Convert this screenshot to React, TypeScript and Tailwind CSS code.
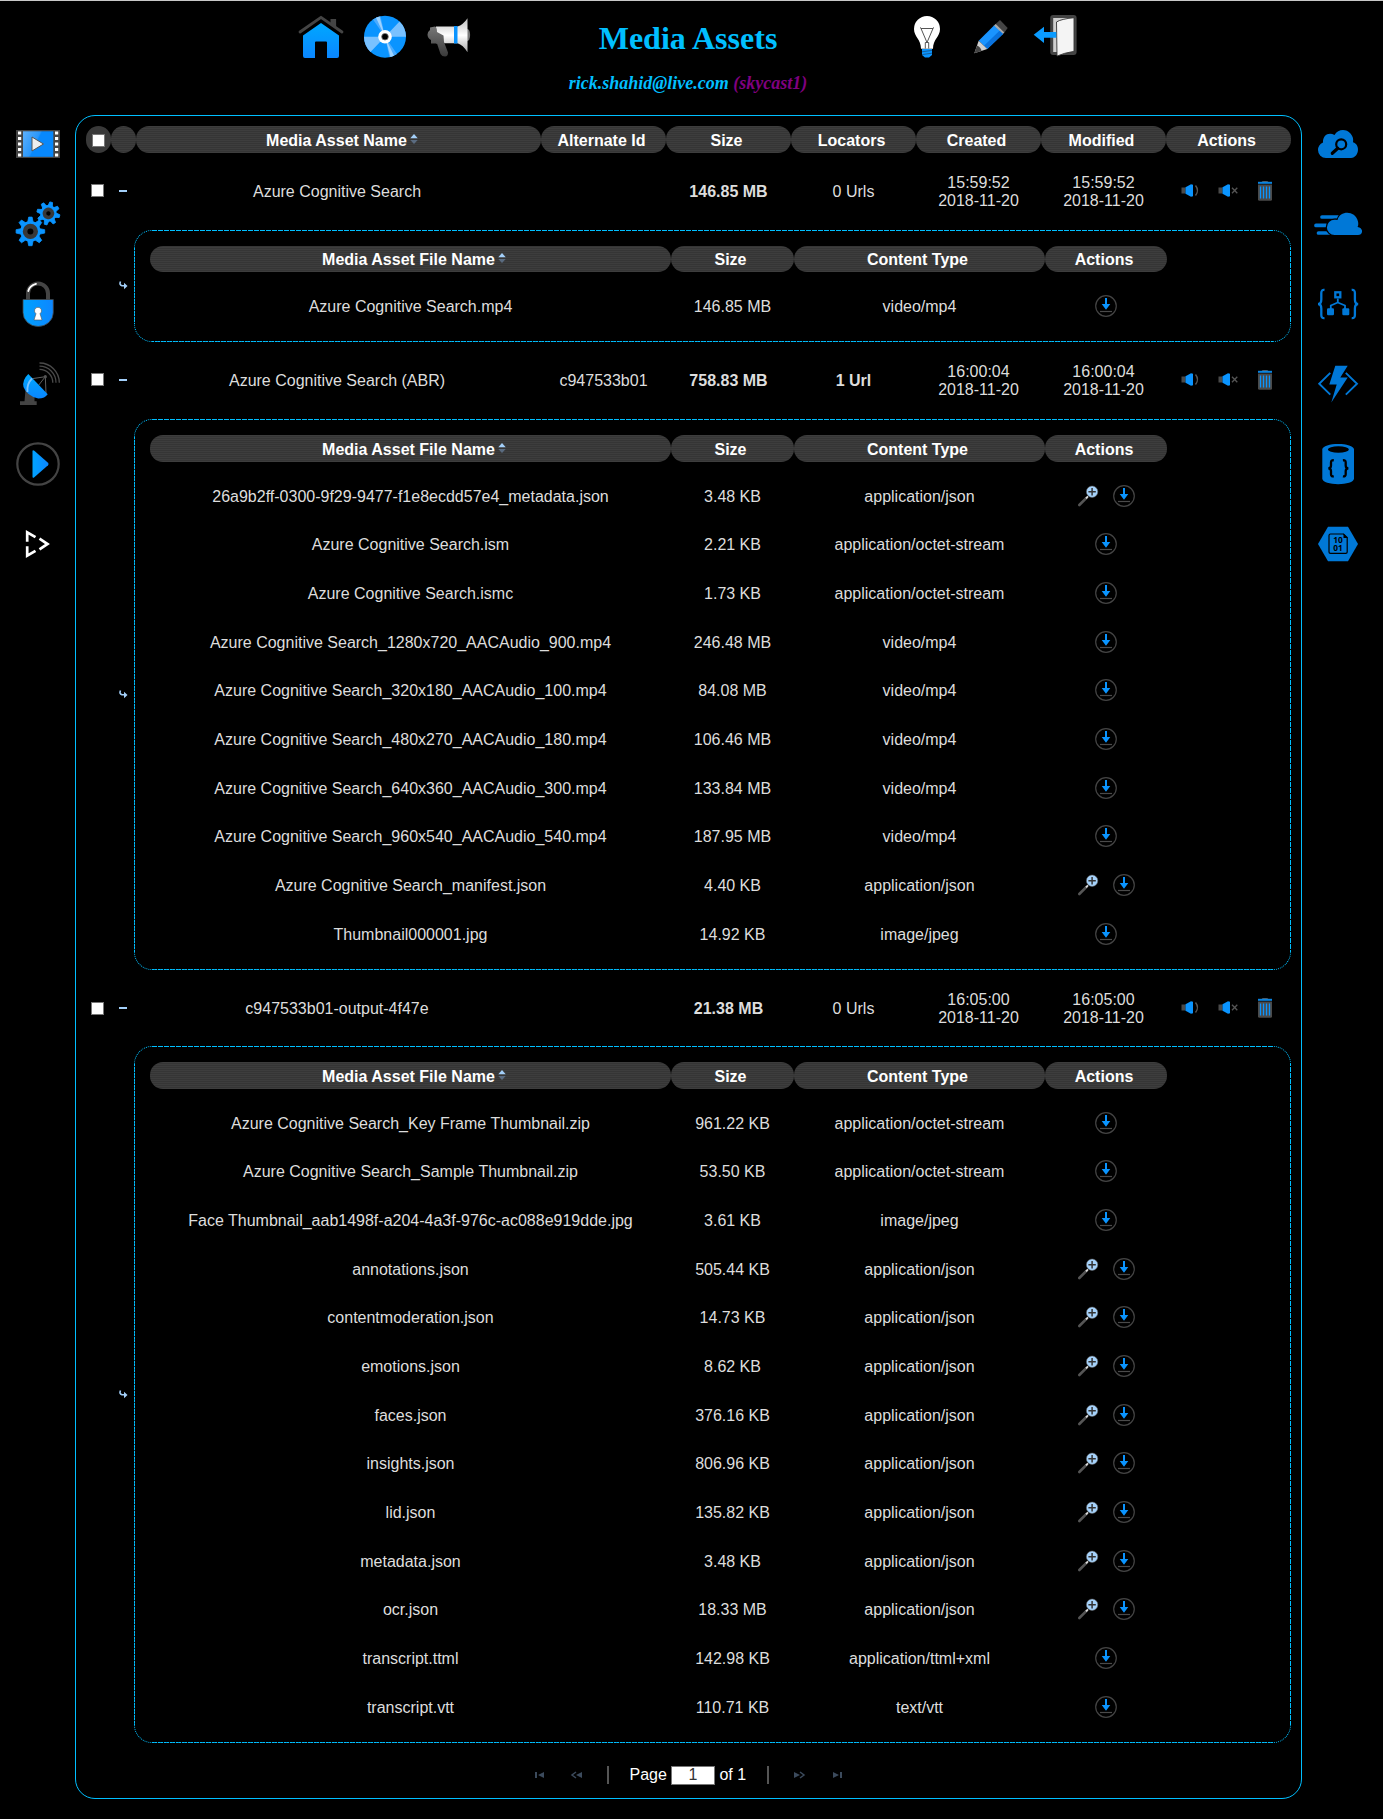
import type { ReactNode } from "react";

const BLUE = "#0078d7";
const SKY = "#0a94ff";
const DARK = "#444444";

function Icon({ children, size = 48, box = 48 }: { children: ReactNode; size?: number; box?: number }) {
  return (
    <svg width={size} height={size} viewBox={`0 0 ${box} ${box}`} fill="none" className="block shrink-0">
      {children}
    </svg>
  );
}

const Gradients = () => (
  <svg width="0" height="0" className="absolute">
    <defs>
      <linearGradient id="sky" x1="0" y1="0" x2="0" y2="1">
        <stop offset="0" stopColor="#00a8ff" />
        <stop offset="1" stopColor="#0a86ff" />
      </linearGradient>
      <linearGradient id="skyx" x1="0" y1="0" x2="1" y2="0">
        <stop offset="0" stopColor="#00a2ff" />
        <stop offset="1" stopColor="#0d86ff" />
      </linearGradient>
      <linearGradient id="film" x1="0" y1="0" x2="1" y2="0.4">
        <stop offset="0" stopColor="#5db0fb" />
        <stop offset="0.5" stopColor="#2a97fb" />
        <stop offset="0.55" stopColor="#0888fc" />
        <stop offset="1" stopColor="#0888fc" />
      </linearGradient>
      <linearGradient id="metal" x1="0" y1="0" x2="0" y2="1">
        <stop offset="0" stopColor="#bdbdbd" />
        <stop offset="0.5" stopColor="#ffffff" />
        <stop offset="1" stopColor="#a8a8a8" />
      </linearGradient>
      <linearGradient id="grip" x1="0" y1="0" x2="0" y2="1">
        <stop offset="0" stopColor="#777" />
        <stop offset="1" stopColor="#3a3a3a" />
      </linearGradient>
    </defs>
  </svg>
);

const HomeIcon = () => (
  <Icon>
    <path d="M33.5 6h5.6v9l-5.6-4.500z" fill={DARK} />
    <path d="M3 19 24 4.300 45 19" stroke={DARK} strokeWidth="2.800" strokeLinecap="round" strokeLinejoin="round" />
    <path d="M24 10 42 22.500V43a2 2 0 0 1-2 2H30V29.500a1 1 0 0 0-1-1H19a1 1 0 0 0-1 1V45H8a2 2 0 0 1-2-2V22.500Z" fill="url(#sky)" />
  </Icon>
);
const DiscIcon = () => (
  <Icon>
    <circle cx="24" cy="23.700" r="21" fill={SKY} />
    <path d="M24 23.700 45 23.700A21 21 0 0 0 38.500 8.500ZM24 23.700 3 23.700A21 21 0 0 0 9.500 38.900Z" fill="#79c1ff" />
    <path d="M24 23.700 12 6.500A21 21 0 0 1 19.500 3.200ZM24 23.700 36 40.900A21 21 0 0 1 28.500 44.200Z" fill="#4aabff" />
    <path d="M24 23.700 15 4.700 18.500 3.400ZM24 23.700 33 42.700 29.500 44Z" fill="#9dd2ff" />
    <circle cx="24" cy="23.700" r="6.800" fill="#fff" />
    <circle cx="24" cy="23.700" r="3.300" fill="#000" stroke="#777" strokeWidth="0.800" />
  </Icon>
);
const MegaphoneIcon = () => (
  <Icon>
    <ellipse cx="42.500" cy="22" rx="2.600" ry="6" fill="#777" />
    <path d="M11 13.500H32.500Q38 12 42.500 5.300V39.300Q38 32 32.500 30.300H11Z" fill="url(#metal)" />
    <rect x="29" y="13" width="3.500" height="17.500" fill={SKY} />
    <path d="M5 14.500 10 13.500Q12 14 12 19L18.500 22.500 19 29 23 39.500Q23 43.500 20 43.500 17 43.500 15.500 41L12 30.500H6V27Q2.500 25 2.500 21.500 2.500 18.500 5 17Z" fill="url(#grip)" />
  </Icon>
);
const BulbIcon = () => (
  <Icon>
    <path d="M24 3A13 13 0 0 1 37 16C37 24 30 26 30 35.700H18C18 26 11 24 11 16A13 13 0 0 1 24 3Z" fill="#fff" />
    <path d="M22.300 35.500V29.500H25.700V35.500M24 29.500 18 15.500H30L24 29.500M17 14.500 19 16M31 14.500 29 16" stroke="#555" strokeWidth="1" />
    <path d="M19 36H29V42L26 44.500H22L19 42Z" fill={SKY} />
    <path d="M19 38.800 29 37.400M19 41.600 29 40.200" stroke="#185080" strokeWidth="0.800" />
  </Icon>
);
const PencilIcon = () => (
  <Icon>
    <path d="M33 7 40.700 15 37 20 27.500 12Z" fill={DARK} />
    <path d="M28.700 11 37.300 19.500 35.500 21.500 26.500 13Z" fill="#aaa" />
    <path d="M27 12.500 36 21 20.300 36 11.700 27.700Z" fill="#1a94ff" />
    <path d="M32.500 17.700 36 21 20.300 36 17 32.700Z" fill="#0a72dd" />
    <path d="M11.700 27.700 20.300 36 7.300 40.300Z" fill="#d0d0d0" />
    <path d="M10 32.500Q14 34 14.500 38L7.300 40.300Z" fill={DARK} />
  </Icon>
);
const ExitIcon = () => (
  <Icon>
    <rect x="20.700" y="3.500" width="23.400" height="37" rx="1.500" fill="#cfcfcf" stroke={DARK} strokeWidth="3" />
    <path d="M25.500 9Q30 6 43 4.700V38.300Q33 40 26 43Z" fill="#f4f4f4" stroke="#333" strokeWidth="0.900" />
    <path d="M2.700 21.700 13 13.700V19H25.300V24.700H13V30Z" fill="#0a9bff" />
  </Icon>
);

const FilmIcon = () => (
  <Icon>
    <rect x="2" y="10" width="44" height="28" fill={DARK} />
    <rect x="9" y="11.300" width="30.300" height="25.500" fill="url(#film)" />
    {[11.5, 17, 22.500, 28, 33.500].map((y) => (
      <g key={y} fill="#fff">
        <rect x="4" y={y} width="3.200" height="3" />
        <rect x="41" y={y} width="3.200" height="3" />
      </g>
    ))}
    <path d="M18 17V31L29.500 24Z" fill="#eee" stroke="#555" strokeWidth="1" />
  </Icon>
);

function Gear({ x, y, r, hub, hole, turn }: { x: number; y: number; r: number; hub: number; hole: number; turn: number }) {
  return (
    <g transform={`translate(${x} ${y}) rotate(${turn})`}>
      {[0, 45, 90, 135, 180, 225, 270, 315].map((a) => (
        <path key={a} transform={`rotate(${a})`} d={`M${-r * 0.2} ${-r * 0.6}L${-r * 0.12} ${-r}H${r * 0.12}L${r * 0.2} ${-r * 0.6}Z`} fill={SKY} stroke={SKY} strokeWidth="0.800" />
      ))}
      <circle r={r * 0.72} fill={SKY} />
      <circle r={hub} fill="#383838" />
      <circle r={hole} fill="#000" />
    </g>
  );
}
const GearsIcon = () => (
  <Icon>
    <Gear x={16.4} y={31.4} r={14.3} hub={7.6} hole={3} turn={0} />
    <Gear x={34.4} y={13.4} r={11.500} hub={5.800} hole={2.200} turn={14} />
  </Icon>
);
const LockIcon = () => (
  <Icon>
    <path d="M14 20V13.500A10 10 0 0 1 34 13.500V20" stroke={DARK} strokeWidth="4" />
    <path d="M14.300 11Q15.500 5.500 22 3.800" stroke="#fff" strokeWidth="1.800" strokeLinecap="round" />
    <path d="M9 19.500H39.300V32.500A15.150 14 0 0 1 9 32.500Z" fill="url(#skyx)" stroke={DARK} strokeWidth="0.800" />
    <path d="M24 27.300A3.500 3.500 0 0 1 26 33.700L28 40H20L22 33.700A3.500 3.500 0 0 1 24 27.300Z" fill="#fff" stroke="#555" strokeWidth="0.600" />
  </Icon>
);
const DishIcon = () => (
  <Icon>
    <path d="M11.500 30 20.500 36V41.300H22.700V45H6V41.300H10.500Z" fill={DARK} />
    <path d="M31.300 16.700 16 19M31.300 16.700 24 26M31.300 16.700 32 33" stroke="#777" strokeWidth="0.800" />
    <circle cx="31.300" cy="16.700" r="1.600" fill="#555" />
    <path d="M14.300 14Q8 20 9.500 27 13 36 24.300 38.600 31 38.500 33.700 34.300Z" fill="url(#sky)" />
    <path d="M18 18.500Q12.500 24 13.500 32" stroke="#7cc4ff" strokeWidth="1.800" />
    <path d="M25.500 3A19.700 19.700 0 0 1 45.300 22.700M25.500 6.200A16.500 16.500 0 0 1 42 22.700M25.500 9.400A13.300 13.300 0 0 1 38.800 22.700" stroke="#4a4a4a" strokeWidth="1.300" />
  </Icon>
);
const PlayIcon = () => (
  <Icon>
    <circle cx="24" cy="24" r="20.700" stroke={DARK} strokeWidth="2.200" />
    <path d="M18.500 11.500Q18.500 9.500 20.300 10.800L34 22.800Q35.200 24 34 25.200L20.300 37.200Q18.500 38.500 18.500 36.500Z" fill="url(#skyx)" />
  </Icon>
);
const StreamIcon = () => (
  <Icon>
    <path d="M13.200 21.700V12.300L21.500 17.200M13.200 26.300V35.700L21.500 30.800M25.500 18.700 33.500 24 25.500 29.300" stroke="#fff" strokeWidth="2.700" />
  </Icon>
);

const CloudSearchIcon = () => (
  <Icon>
    <path d="M12 38A8 8 0 0 1 4 30 8.500 8.500 0 0 1 9 22.500C8.500 15 15 11.500 20.500 15 24 9 32 8.500 36.500 13.500 39 16.500 39.500 19 39 22.200 46 24 46 37 37 38Z" fill={BLUE} />
    <path d="M23.800 28.300 18.300 33.300" stroke="#000" strokeWidth="3.200" strokeLinecap="round" />
    <circle cx="27.200" cy="24.300" r="5" stroke="#000" strokeWidth="2.200" />
  </Icon>
);
const CloudFastIcon = () => (
  <Icon>
    <path d="M8 17H24M2 25.400H12M4.500 33H15" stroke={BLUE} strokeWidth="3.700" strokeLinecap="round" />
    <path d="M20.500 35A7.500 7.500 0 0 1 20.500 19.800Q22 19.500 23.500 20C26 10.500 41 10 44 21.500 44.500 24 44.300 25.500 43.500 27 50 28 49 35 44 35Z" fill={BLUE} stroke="#000" strokeWidth="2.400" paintOrder="stroke" />
  </Icon>
);
const LogicIcon = () => (
  <Icon>
    <path d="M10.500 10Q7.300 9.500 7.300 13V19.500Q7.300 24 4 24 7.300 24 7.300 28.500V35Q7.300 38.500 10.500 38.200M37.700 10Q40.900 9.500 40.900 13V19.500Q40.900 24 44.200 24 40.900 24 40.900 28.500V35Q40.900 38.500 37.700 38.200" stroke={BLUE} strokeWidth="2.300" />
    <rect x="21.300" y="12.300" width="5" height="5" stroke={BLUE} strokeWidth="2.300" />
    <path d="M23.800 18.500V22.500L16.800 25.500V29M23.800 22.500 31 25.500V29" stroke={BLUE} strokeWidth="1.800" />
    <rect x="13" y="28.200" width="7" height="7" rx="1.200" fill={BLUE} />
    <rect x="28.300" y="28.200" width="7" height="7" rx="1.200" fill={BLUE} />
  </Icon>
);
const FunctionIcon = () => (
  <Icon>
    <path d="M16.300 12.900 5.200 23.800 16.300 34.600M31.800 12.900 43 23.800 31.800 34.600" stroke={BLUE} strokeWidth="1.900" />
    <path d="M21.300 5.700H33.700L26.300 17.500H33.700L17.300 42.500 22.700 24.500H15.300Z" fill={BLUE} />
  </Icon>
);
const CosmosIcon = () => (
  <Icon>
    <path d="M8.300 9.500C8.300 2 40 2 40 9.500V38.500C40 46 8.300 46 8.300 38.500Z" fill={BLUE} />
    <ellipse cx="24.400" cy="9.500" rx="10.500" ry="3.300" fill="#000" />
    <path d="M19.800 20.300Q17 20 17 22.500V25.500Q17 28.300 14.300 28.300 17 28.300 17 31V34.200Q17 36.700 19.800 36.300M28.900 20.300Q31.700 20 31.700 22.500V25.500Q31.700 28.300 34.400 28.300 31.700 28.300 31.700 31V34.200Q31.700 36.700 28.900 36.300" stroke="#000" strokeWidth="2.300" />
  </Icon>
);
const BlobIcon = () => (
  <Icon>
    <path d="M14 6.700H34L44 24 34 41.300H14L4 24Z" fill={BLUE} />
    <path d="M29.500 14H16.500Q15 14 15 15.500V32Q15 33.300 16.500 33.300H31.800Q33.200 33.300 33.200 32V17.500Z" stroke="#000" strokeWidth="1.200" />
    <path d="M29.500 13.500V18H33.800Z" fill="#000" />
    <text x="24" y="23" textAnchor="middle" fontSize="8.300" fontWeight="700" fontFamily="Open Sans, sans-serif" fill="#000">10</text>
    <text x="24" y="31" textAnchor="middle" fontSize="8.300" fontWeight="700" fontFamily="Open Sans, sans-serif" fill="#000">01</text>
  </Icon>
);

const DownloadIcon = () => (
  <Icon size={22} box={22}>
    <circle cx="11" cy="11" r="10.300" stroke="#444" strokeWidth="1.200" />
    <path d="M10 3H12V9H15.300L11 14.800 6.700 9H10Z" fill={SKY} />
    <path d="M5 16.500H17" stroke="#4a4a4a" strokeWidth="1.200" />
  </Icon>
);
const InspectIcon = () => (
  <Icon size={22} box={22}>
    <path d="M2.300 20 9.500 12.800" stroke="#555" strokeWidth="2.600" strokeLinecap="round" />
    <path d="M9 13.300 11 11.300" stroke="#ddd" strokeWidth="1.800" />
    <circle cx="15.100" cy="6.700" r="5.700" fill="#a5d2fb" stroke="#666" strokeWidth="0.500" />
    <path d="M15.100 3V10.400M11.400 6.700H18.800" stroke="#333" strokeWidth="1.500" />
  </Icon>
);
const SpeakerBase = () => (
  <>
    <rect x="1.500" y="7.500" width="4" height="6" fill="#4a4a4a" />
    <path d="M5.500 7.300 11 4.300 13 4.800V16.200L11 16.700 5.500 13.700Z" fill="#0a94ff" />
  </>
);
const PublishIcon = () => (
  <Icon size={22} box={22}>
    <SpeakerBase />
    <path d="M15.500 5.500Q19.500 10.500 15.500 15.500" stroke="#555" strokeWidth="1.400" />
  </Icon>
);
const UnpublishIcon = () => (
  <Icon size={22} box={22}>
    <SpeakerBase />
    <path d="M15 7.700 20.300 13.300M20.300 7.700 15 13.300" stroke="#555" strokeWidth="1.300" />
  </Icon>
);
const TrashIcon = () => (
  <Icon size={22} box={22}>
    <path d="M7.500 2.300Q8 1 9.500 1H12.500Q14 1 14.500 2.300Z" fill="#555" />
    <rect x="4" y="1.800" width="14" height="2" fill="#0a84e0" />
    <path d="M4 4.600H18V19.500Q18 20.700 16.500 20.700H5.500Q4 20.700 4 19.500Z" fill="#4a4a4a" />
    <path d="M6.500 6.500V18.500M9.500 6.500V18.500M12.500 6.500V18.500M15.500 6.500V18.500" stroke={SKY} strokeWidth="1.300" />
  </Icon>
);

type FileRow = { name: string; size: string; type: string };
type Asset = {
  name: string;
  alt?: string;
  size: string;
  urls: string;
  time: string;
  row: string;
  panel: string;
  head: string;
  files: FileRow[];
};

const f = (name: string, size: string, type: string): FileRow => ({ name, size, type });
const JSON_TYPE = "application/json";
const STREAM = "application/octet-stream";

const assets: Asset[] = [
  {
    name: "Azure Cognitive Search",
    size: "146.85 MB",
    urls: "0 Urls",
    time: "15:59:52",
    row: "h-[77px]",
    panel: "h-[112px]",
    head: "h-[26px]",
    files: [f("Azure Cognitive Search.mp4", "146.85 MB", "video/mp4")],
  },
  {
    name: "Azure Cognitive Search (ABR)",
    alt: "c947533b01",
    size: "758.83 MB",
    urls: "1 Url",
    time: "16:00:04",
    row: "h-[77px]",
    panel: "h-[551px]",
    head: "h-[27px]",
    files: [
      f("26a9b2ff-0300-9f29-9477-f1e8ecdd57e4_metadata.json", "3.48 KB", JSON_TYPE),
      f("Azure Cognitive Search.ism", "2.21 KB", STREAM),
      f("Azure Cognitive Search.ismc", "1.73 KB", STREAM),
      f("Azure Cognitive Search_1280x720_AACAudio_900.mp4", "246.48 MB", "video/mp4"),
      f("Azure Cognitive Search_320x180_AACAudio_100.mp4", "84.08 MB", "video/mp4"),
      f("Azure Cognitive Search_480x270_AACAudio_180.mp4", "106.46 MB", "video/mp4"),
      f("Azure Cognitive Search_640x360_AACAudio_300.mp4", "133.84 MB", "video/mp4"),
      f("Azure Cognitive Search_960x540_AACAudio_540.mp4", "187.95 MB", "video/mp4"),
      f("Azure Cognitive Search_manifest.json", "4.40 KB", JSON_TYPE),
      f("Thumbnail000001.jpg", "14.92 KB", "image/jpeg"),
    ],
  },
  {
    name: "c947533b01-output-4f47e",
    size: "21.38 MB",
    urls: "0 Urls",
    time: "16:05:00",
    row: "h-[76px] pt-[2px]",
    panel: "h-[697px]",
    head: "h-[27px]",
    files: [
      f("Azure Cognitive Search_Key Frame Thumbnail.zip", "961.22 KB", STREAM),
      f("Azure Cognitive Search_Sample Thumbnail.zip", "53.50 KB", STREAM),
      f("Face Thumbnail_aab1498f-a204-4a3f-976c-ac088e919dde.jpg", "3.61 KB", "image/jpeg"),
      f("annotations.json", "505.44 KB", JSON_TYPE),
      f("contentmoderation.json", "14.73 KB", JSON_TYPE),
      f("emotions.json", "8.62 KB", JSON_TYPE),
      f("faces.json", "376.16 KB", JSON_TYPE),
      f("insights.json", "806.96 KB", JSON_TYPE),
      f("lid.json", "135.82 KB", JSON_TYPE),
      f("metadata.json", "3.48 KB", JSON_TYPE),
      f("ocr.json", "18.33 MB", JSON_TYPE),
      f("transcript.ttml", "142.98 KB", "application/ttml+xml"),
      f("transcript.vtt", "110.71 KB", "text/vtt"),
    ],
  },
];

function SortMark() {
  return (
    <svg width="8" height="10" viewBox="0 0 8 10" className="absolute top-[2px] left-full ml-[3px]">
      <path d="M0.300 4.200 4 0 7.700 4.200Z" fill="#a3cff9" />
      <path d="M0.300 6 4 10 7.700 6Z" fill="#5a6b80" />
    </svg>
  );
}

function Pill({ children, sort }: { children?: ReactNode; sort?: boolean }) {
  return (
    <div className="flex h-full items-center justify-center rounded-[13px] bg-[#393939] bg-[repeating-linear-gradient(0deg,#3d3d3d_0px,#3d3d3d_1px,#353535_1px,#353535_2px)] pr-1 font-bold text-white">
      <span className="relative top-px">
        {children}
        {sort && <SortMark />}
      </span>
    </div>
  );
}

const Box = () => <span className="block h-[13px] w-[13px] border border-[#767676] bg-white" />;

const mainCols = "grid grid-cols-[25px_25px_405px_repeat(6,125px)]";
const fileCols = "grid grid-cols-[521px_123px_251px_122px]";

// Thin dash strips that run along the straight edges of a file panel, between its rounded corners.
const dashX =
  "h-px absolute -left-px -right-px mx-[18px] bg-[repeating-linear-gradient(90deg,#00bfff_0px,#00bfff_2px,transparent_2px,transparent_3px)]";
const dashY =
  "w-px absolute -top-px -bottom-px my-[18px] bg-[repeating-linear-gradient(180deg,#00bfff_0px,#00bfff_2px,transparent_2px,transparent_3px)]";

function FileTable({ files, panel, head }: { files: FileRow[]; panel: string; head: string }) {
  return (
    <div className={`${panel} relative ml-[48px] flex-1 rounded-[18px] border border-dotted border-[#00bfff] px-[15px] pt-[15px]`}>
      <span className={`${dashX} -top-px`} />
      <span className={`${dashX} -bottom-px`} />
      <span className={`${dashY} -left-px`} />
      <span className={`${dashY} -right-px`} />
      <div className={`${fileCols} ${head}`}>
        <Pill sort>Media Asset File Name</Pill>
        <Pill>Size</Pill>
        <Pill>Content Type</Pill>
        <Pill>Actions</Pill>
      </div>
      <div className="pt-[10.200px]">
        {files.map((file) => (
          <div key={file.name} className={`${fileCols} h-[48.680px] items-center text-center`}>
            <span>{file.name}</span>
            <span>{file.size}</span>
            <span>{file.type}</span>
            <span className="flex justify-center gap-[14px] pb-[2px]">
              {file.type === JSON_TYPE && <InspectIcon />}
              <DownloadIcon />
            </span>
          </div>
        ))}
      </div>
    </div>
  );
}

function AssetRows({ asset }: { asset: Asset }) {
  const stamp = (
    <span>
      {asset.time}
      <br />
      2018-11-20
    </span>
  );
  return (
    <>
      <div className={`${mainCols} ${asset.row} items-center text-center`}>
        <span className="pb-[2px] pl-[5px]">
          <Box />
        </span>
        <span className="mb-[2px] ml-2 h-[2px] w-2 bg-[#a3cff9]" />
        <span className="pr-[3px]">{asset.name}</span>
        <span>{asset.alt}</span>
        <span className="font-bold">{asset.size}</span>
        <span className={asset.urls === "1 Url" ? "font-bold" : ""}>{asset.urls}</span>
        {stamp}
        {stamp}
        <span className="flex gap-[15px] pb-[2px] pl-[13.500px]">
          <PublishIcon />
          <UnpublishIcon />
          <TrashIcon />
        </span>
      </div>
      <div className="relative flex">
        <svg width="9" height="9" viewBox="0 0 9 9" fill="none" className="absolute top-1/2 left-[33px] -mt-[5px]">
          <path d="M1.500 0.500Q0 3.800 3 4.800H5.500" stroke="#a3cff9" strokeWidth="1.600" />
          <path d="M5 1.800 8.500 5 5 8.300Z" fill="#a3cff9" />
        </svg>
        <FileTable files={asset.files} panel={asset.panel} head={asset.head} />
      </div>
    </>
  );
}

function Pager() {
  return (
    <div className="flex h-[20px] items-center text-white">
      <svg width="48" height="8" viewBox="0 0 48 8" fill="#3b4a5c">
        <path d="M0 1H2V7H0ZM9 1V7L3 4Z" />
        <path d="M47 1V7L41 4Z" />
        <path d="M41 1 37 4 41 7" fill="none" stroke="#3b4a5c" strokeWidth="1.500" />
      </svg>
      <span className="ml-[24px] h-[18px] w-[2px] bg-[#555]" />
      <span className="ml-[20.500px]">Page</span>
      <span className="ml-[4px] flex h-[19px] w-[44px] items-center justify-center border border-[#767676] bg-white text-[#333]">1</span>
      <span className="ml-[4.500px]">of 1</span>
      <span className="ml-[21px] h-[18px] w-[2px] bg-[#555]" />
      <svg width="49" height="8" viewBox="0 0 49 8" fill="#3b4a5c" className="ml-[25px]">
        <path d="M0 1V7L6 4Z" />
        <path d="M6 1 10 4 6 7" fill="none" stroke="#3b4a5c" strokeWidth="1.500" />
        <path d="M39 1V7L45 4ZM46 1H48V7H46Z" />
      </svg>
    </div>
  );
}

export default function App() {
  return (
    <div className="h-[1819px] w-[1383px] overflow-hidden border-t border-[#c8c8c8] bg-black font-['Liberation_Sans',Arial,sans-serif] text-[16px] leading-[18px] text-[#dddddd]">
      <Gradients />
      <header className="flex h-[114px] justify-center pt-3 pr-[7px]">
        <div className="flex gap-4">
          <HomeIcon />
          <DiscIcon />
          <MegaphoneIcon />
        </div>
        <div className="w-[430px] text-center font-['Liberation_Serif','Times_New_Roman',serif] font-bold whitespace-nowrap">
          <h1 className="pt-[7px] text-[32px] leading-[36px] text-[#00bfff]">Media Assets</h1>
          <p className="pt-[17px] text-[18px] leading-[20px] text-[#00bfff] italic">
            rick.shahid@live.com <span className="text-[#800080]">(skycast1)</span>
          </p>
        </div>
        <div className="flex gap-4">
          <BulbIcon />
          <PencilIcon />
          <ExitIcon />
        </div>
      </header>
      <div className="flex">
        <nav className="flex w-[75px] flex-col gap-8 pt-[5px] pl-[14px]">
          <FilmIcon />
          <GearsIcon />
          <LockIcon />
          <DishIcon />
          <PlayIcon />
          <StreamIcon />
        </nav>
        <main className="h-[1684px] w-[1227px] rounded-[20px] border border-[#00bfff] px-[10px] pt-[10px]">
          <div className={`${mainCols} h-[27px]`}>
            <div className="flex items-center justify-center rounded-[13px] bg-[#393939] pt-[2px]">
              <Box />
            </div>
            <Pill />
            <Pill sort>Media Asset Name</Pill>
            {["Alternate Id", "Size", "Locators", "Created", "Modified", "Actions"].map((t) => (
              <Pill key={t}>{t}</Pill>
            ))}
          </div>
          {assets.map((a) => (
            <AssetRows key={a.name} asset={a} />
          ))}
          <div className="pt-[22px] pl-[449px]">
            <Pager />
          </div>
        </main>
        <nav className="flex flex-col gap-8 pt-[5px] pl-[12px]">
          <CloudSearchIcon />
          <CloudFastIcon />
          <LogicIcon />
          <FunctionIcon />
          <CosmosIcon />
          <BlobIcon />
        </nav>
      </div>
    </div>
  );
}
